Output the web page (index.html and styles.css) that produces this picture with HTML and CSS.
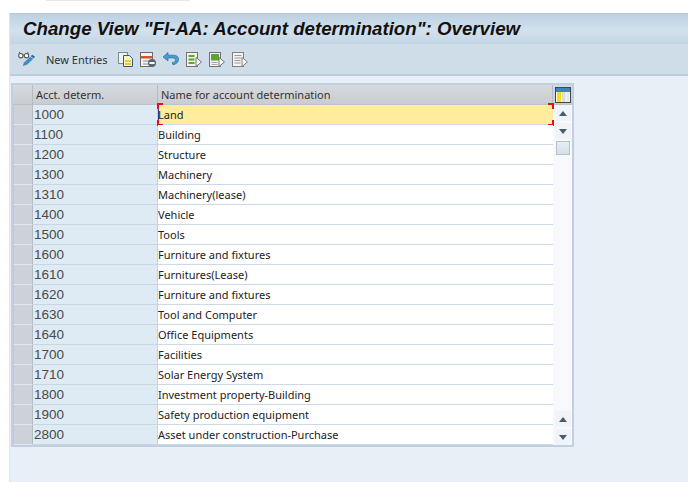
FILE: index.html
```html
<!DOCTYPE html>
<html lang="en">
<head>
<meta charset="utf-8">
<title>FI-AA: Account determination</title>
<link rel="stylesheet" href="styles.css">
</head>
<body>
<div class="topstrip"><div class="topbar"></div></div>
<main class="app">
  <header class="titlebar"><h1>Change View "FI-AA: Account determination": Overview</h1></header>
  <nav class="toolbar">
    <svg class="ico glasses" width="18" height="18" viewBox="0 0 19 18"><circle cx="3" cy="5.500" r="2.300" fill="#fff" stroke="#555" stroke-width="1.200"/><circle cx="9" cy="5.500" r="2.300" fill="#fff" stroke="#555" stroke-width="1.200"/><path d="M5.300 5h1.500M1 3.500l1-2M11 3.500l-1-2" stroke="#555" fill="none"/><path d="M5 16.500l1.500-4 6.500-6 3 2.500-6.500 6z" fill="#3d8fc0"/><path d="M13.500 6l1.500-1.500 3 2-1.500 2z" fill="#2c6f9c"/></svg>
    <span class="newentries">New Entries</span>
    <svg class="ico" width="17" height="17" viewBox="0 0 17 17"><rect x="1.500" y="1.500" width="9" height="11" fill="#eef2f5" stroke="#7d8b97"/><path d="M6.500 4.500h6l3 3v8h-9z" fill="#fff3b5" stroke="#27608f"/><path d="M8 9h6v2H8zM8 12h6v2H8z" fill="#f6c445"/></svg>
    <svg class="ico" width="18" height="17" viewBox="0 0 18 17"><rect x="1.500" y="1.500" width="12" height="14" fill="#f4f4f4" stroke="#6b6b6b"/><rect x="2" y="5" width="11" height="2.500" fill="#d9532c"/><path d="M4 10h7M4 13h5" stroke="#888"/><circle cx="13" cy="12" r="4" fill="#5a6670"/><rect x="10.500" y="11" width="5" height="2" fill="#fff"/></svg>
    <svg class="ico" width="18" height="17" viewBox="0 0 18 17"><path d="M1 6l5-4.500v2.700h5.500c3.700 0 5.500 2.300 5 5-.5 2.500-2.500 4-5.500 4.500l-1-2c2.200-.3 3.500-1.300 3.500-2.800 0-1.300-1-2-2.800-2H6v3z" fill="#4a9bd1" stroke="#2b6f9f" stroke-width=".7"/></svg>
    <svg class="ico" width="18" height="17" viewBox="0 0 18 17"><rect x="1.500" y="1.500" width="11" height="14" fill="#f1f1f1" stroke="#737373"/><path d="M3.500 4h6v2h-6zM3.500 7.500h6v2h-6zM3.500 11h6v2h-6z" fill="#5da52f"/><path d="M11 6.500l5.500 4.500-5.500 4.500z" fill="#fff" stroke="#737373"/></svg>
    <svg class="ico" width="18" height="17" viewBox="0 0 18 17"><rect x="1.500" y="1.500" width="11" height="14" fill="#f1f1f1" stroke="#737373"/><rect x="3" y="3" width="8" height="6.500" fill="#5da52f"/><path d="M3.500 11.500h6M3.500 13.500h6" stroke="#aaa"/><path d="M11 6.500l5.500 4.500-5.500 4.500z" fill="#fff" stroke="#737373"/></svg>
    <svg class="ico" width="18" height="17" viewBox="0 0 18 17"><rect x="1.500" y="1.500" width="11" height="14" fill="#f4f4f4" stroke="#808080"/><path d="M3.500 4.500h7M3.500 7h7M3.500 9.500h6M3.500 12h6" stroke="#9a9a9a"/><path d="M11 6.500l5.500 4.500-5.500 4.500z" fill="#fff" stroke="#808080"/></svg>
  </nav>
  <section class="content">
    <div class="table">
      <div class="grid">
        <div class="hd corner"></div>
        <div class="hd keyhead">Acct. determ.</div>
        <div class="hd namehead">Name for account determination</div>
        <div class="hd cfg"><svg width="16" height="16" viewBox="0 0 16 16"><rect x=".5" y=".5" width="15" height="15" fill="#fff" stroke="#444"/><rect x="1" y="1" width="14" height="4" fill="#3d85c0"/><rect x="2" y="5" width="4" height="10" fill="#f7dc12"/><rect x="7" y="5" width="3.500" height="10" fill="#d8dde2"/><rect x="11.500" y="5" width="3" height="10" fill="#e4e8ec"/></svg></div>

        <div class="sel"></div><div class="key">1000</div><div class="name current">Land<i class="caret"></i><i class="mark tl"></i><i class="mark bl"></i><i class="mark tr"></i><i class="mark br"></i></div>
        <div class="scroll">
          <div class="track">
            <div class="sbtn"><i class="up"></i></div>
            <div class="sbtn"><i class="down"></i></div>
            <div class="thumb"></div>
            <div class="spacer"></div>
            <div class="sbtn"><i class="up"></i></div>
            <div class="sbtn"><i class="down"></i></div>
          </div>
        </div>
        <div class="sel"></div><div class="key">1100</div><div class="name">Building</div>
        <div class="sel"></div><div class="key">1200</div><div class="name">Structure</div>
        <div class="sel"></div><div class="key">1300</div><div class="name">Machinery</div>
        <div class="sel"></div><div class="key">1310</div><div class="name">Machinery(lease)</div>
        <div class="sel"></div><div class="key">1400</div><div class="name">Vehicle</div>
        <div class="sel"></div><div class="key">1500</div><div class="name">Tools</div>
        <div class="sel"></div><div class="key">1600</div><div class="name">Furniture and fixtures</div>
        <div class="sel"></div><div class="key">1610</div><div class="name">Furnitures(Lease)</div>
        <div class="sel"></div><div class="key">1620</div><div class="name">Furniture and fixtures</div>
        <div class="sel"></div><div class="key">1630</div><div class="name">Tool and Computer</div>
        <div class="sel"></div><div class="key">1640</div><div class="name">Office Equipments</div>
        <div class="sel"></div><div class="key">1700</div><div class="name">Facilities</div>
        <div class="sel"></div><div class="key">1710</div><div class="name">Solar Energy System</div>
        <div class="sel"></div><div class="key">1800</div><div class="name">Investment property-Building</div>
        <div class="sel"></div><div class="key">1900</div><div class="name">Safety production equipment</div>
        <div class="sel"></div><div class="key">2800</div><div class="name">Asset under construction-Purchase</div>
      </div>
    </div>
  </section>
</main>
</body>
</html>
```
FILE: styles.css
```css
* { box-sizing: border-box; }
html, body { margin: 0; height: 100%; }
body {
  width: 688px;
  height: 482px;
  overflow: hidden;
  background: #fff;
  font-family: "Noto Sans", sans-serif;
  color: #222;
  display: flex;
  flex-direction: column;
}
.topstrip {
  flex: none;
  height: 13px;
  padding-left: 46px;
}
.topbar { width: 144px; height: 1px; background: #e6e8ea; }
.app {
  flex: 1;
  margin-left: 9px;
  display: flex;
  flex-direction: column;
  background: #e8eff7;
  border-left: 1px solid #dde5ee;
  min-height: 0;
}
.titlebar {
  flex: none;
  height: 31px;
  padding-left: 13px;
  background: linear-gradient(#bcd1e2, #d3e1ec 55%, #c3d5e4);
  border-top: 1px solid #b5c6d6;
  display: flex;
  align-items: center;
}
.titlebar h1 {
  margin: 0;
  font: italic bold 18.700px "Liberation Sans", sans-serif;
  color: #111;
  white-space: nowrap;
}
.toolbar {
  flex: none;
  height: 32px;
  background: #cfdde9;
  border-bottom: 2px solid #bccddc;
  display: flex;
  align-items: center;
  padding-left: 8px;
  gap: 5px;
}
.ico { flex: none; display: block; }
.newentries {
  font-size: 11px;
  color: #2a3540;
  margin: 0 4px 0 5px;
  white-space: nowrap;
}
.content { flex: 1; padding: 7px 0 0 1px; }
.table {
  width: 563px;
  background: #c9d0d8;
  border: 2px solid #c0d0e0;
}
.grid {
  display: grid;
  grid-template-columns: 20px 125px 395px 19px;
  grid-auto-rows: 20px;
  background: #fff;
}
.hd {
  background: linear-gradient(#d6d9dd, #c9cdd2);
  border-right: 1px solid #b4bcc5;
  border-bottom: 1px solid #b9c3cd;
  font: 11px "Noto Sans", sans-serif;
  color: #333;
  display: flex;
  align-items: center;
  padding-left: 3px;
}
.corner { padding: 0; }
.cfg { border-right: 0; padding: 0 0 0 2px; }
.cfg svg { display: block; }
.sel {
  background: #cdd2d8;
  border-right: 1px solid #b4bcc5;
  border-bottom: 1px solid #e4e8ec;
  border-left: 1px solid #c0c8d0;
}
.key {
  background: #deeaf4;
  border-right: 1px solid #c4d2e0;
  border-bottom: 1px solid #c8d6e4;
  font: 13.500px/20px "Liberation Sans", sans-serif;
  color: #4a4a4a;
  padding-left: 1px;
}
.name {
  background: #fff;
  border-bottom: 1px solid #cddae6;
  font-size: 11px;
  line-height: 20px;
  color: #222;
  white-space: nowrap;
  position: relative;
}
.current { background: #ffec9c; }
.caret { position: absolute; left: 0; top: 3px; width: 1px; height: 14px; background: #2a3a8a; }
.mark { position: absolute; width: 6px; height: 6px; border: 0 solid #e0101c; }
.tl { left: -1px; top: -2px; border-width: 2px 0 0 2px; }
.bl { left: -1px; bottom: -2px; border-width: 0 0 2px 2px; }
.tr { right: -1px; top: -2px; border-width: 2px 2px 0 0; }
.br { right: -1px; bottom: -2px; border-width: 0 2px 2px 0; }
.scroll { grid-column: 4; grid-row: 2 / span 17; background: #f7f9fc; }
.track { height: 100%; display: flex; flex-direction: column; }
.sbtn {
  flex: none;
  height: 16px;
  margin: 0 1px 2px 2px;
  background: #f0f3f7;
  display: flex;
  align-items: center;
  justify-content: center;
}
.sbtn:last-child { margin-bottom: 0; }
.up, .down { width: 0; height: 0; border-left: 4px solid transparent; border-right: 4px solid transparent; }
.up { border-bottom: 5px solid #4b5b6b; }
.down { border-top: 5px solid #4b5b6b; }
.thumb {
  flex: none;
  height: 14px;
  width: 14px;
  margin: 0 0 0 3px;
  background: linear-gradient(#e6edf4, #d6e0ea);
  border: 1px solid #b8c0c8;
}
.spacer { flex: 1; }
```
